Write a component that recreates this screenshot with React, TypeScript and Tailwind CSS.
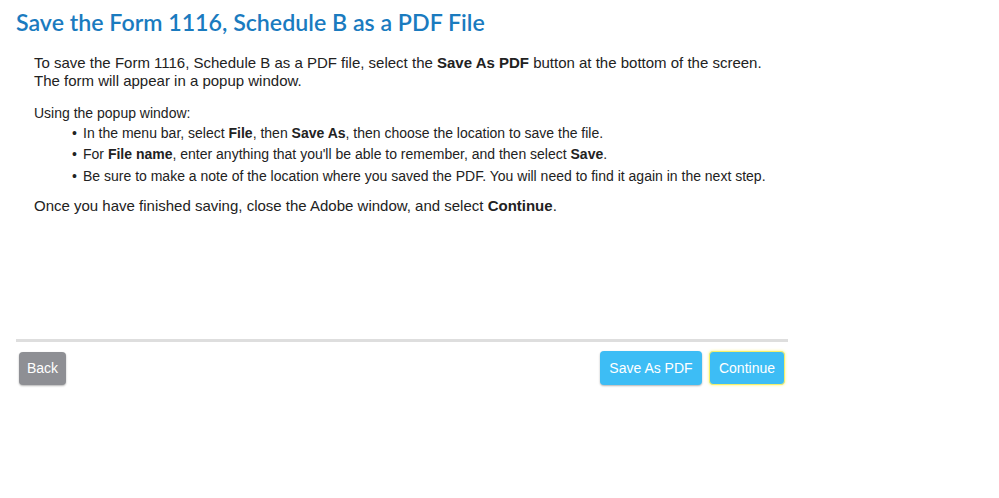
export default function App() {
  const bullets = [
    <>In the menu bar, select <b>File</b>, then <b>Save As</b>, then choose the location to save the file.</>,
    <>For <b>File name</b>, enter anything that you'll be able to remember, and then select <b>Save</b>.</>,
    <>Be sure to make a note of the location where you saved the PDF. You will need to find it again in the next step.</>,
  ];

  return (
    <div className="w-[999px] h-[498px] bg-white font-['Liberation_Sans',Arial,sans-serif] text-[#222]">
      <div className="w-[772px] ml-4">
        <h1 className="pt-[9px] text-[23.2px] leading-[26px] font-['Lato',sans-serif] font-semibold text-[#1a7bbf]">
          Save the Form 1116, Schedule B as a PDF File
        </h1>
        <div className="h-[304px] pl-[18px] pt-[19px]">
          <p className="text-[15px] leading-[18px]">
            To save the Form 1116, Schedule B as a PDF file, select the <b>Save As PDF</b> button at the bottom of the screen.
            <br />
            The form will appear in a popup window.
          </p>
          <p className="mt-[14px] text-[14px] leading-[18px]">Using the popup window:</p>
          <ul className="mt-[1px] pl-[38px] text-[14px] leading-[21.3px]">
            {bullets.map((b, i) => (
              <li key={i} className="flex">
                <span className="w-[11px] shrink-0">•</span>
                <span>{b}</span>
              </li>
            ))}
          </ul>
          <p className="mt-[10px] text-[15px] leading-[18px]">
            Once you have finished saving, close the Adobe window, and select <b>Continue</b>.
          </p>
        </div>
        <div className="border-t-[3px] border-[#dedede]" />
        <div className="flex items-center justify-between pt-[9px] px-[3px]">
          <button className="w-[47px] h-[33px] rounded-[4px] bg-[#8e8f94] text-white text-[14px] shadow-[0_1px_2px_rgba(0,0,0,0.3)]">
            Back
          </button>
          <div className="flex gap-[7px]">
            <button className="w-[102px] h-[34px] rounded-[4px] bg-[#3dbdf5] text-white text-[14px] shadow-[0_1px_2px_rgba(0,0,0,0.3)]">
              Save As PDF
            </button>
            <button className="w-[76px] h-[34px] rounded-[4px] bg-[#3dbdf5] text-white text-[14px] border border-[#f3ef6b] shadow-[0_0_3px_#fff176]">
              Continue
            </button>
          </div>
        </div>
      </div>
    </div>
  );
}
